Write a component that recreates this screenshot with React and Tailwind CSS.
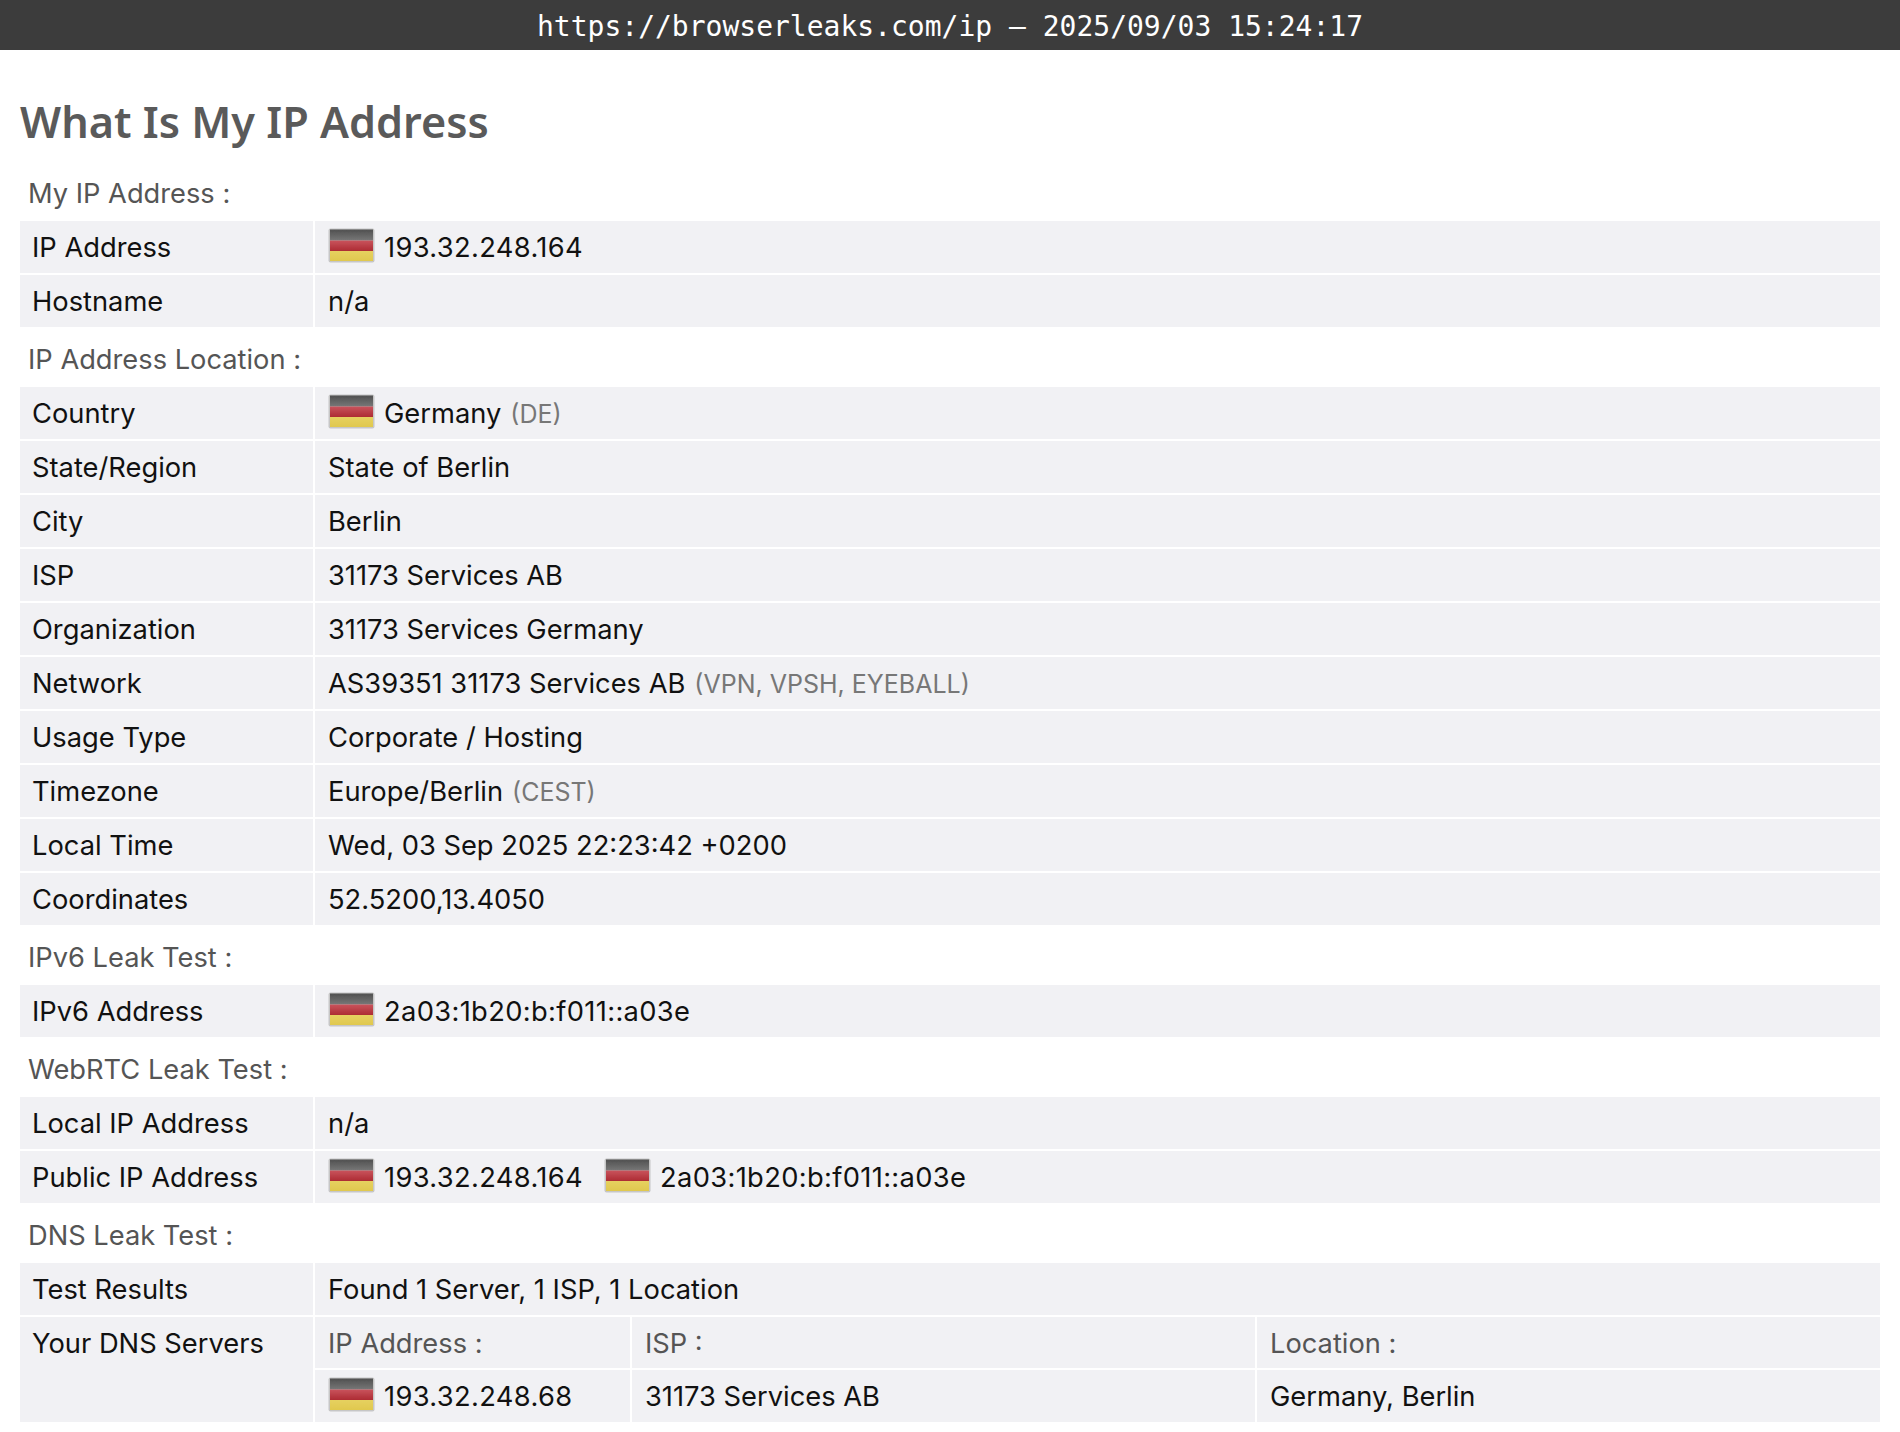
const Flag = () => (
  <svg width="47" height="35" viewBox="0 0 47 35" className="inline-block -my-[4px] align-[-1.5px] mr-[9px]">
    <defs>
      <linearGradient id="flagBlack" x1="0" y1="0" x2="0" y2="1">
        <stop offset="0" stopColor="#505050" />
        <stop offset="1" stopColor="#777777" />
      </linearGradient>
      <linearGradient id="flagRed" x1="0" y1="0" x2="0" y2="1">
        <stop offset="0" stopColor="#c9545c" />
        <stop offset="1" stopColor="#ad2b34" />
      </linearGradient>
      <linearGradient id="flagGold" x1="0" y1="0" x2="0" y2="1">
        <stop offset="0" stopColor="#e6d160" />
        <stop offset="1" stopColor="#e0c84e" />
      </linearGradient>
      <filter id="soft" x="-5%" y="-5%" width="110%" height="110%">
        <feGaussianBlur stdDeviation="0.5" />
      </filter>
    </defs>
    <g filter="url(#soft)">
      <rect x="0.5" y="0.5" width="46" height="34" rx="2" fill="#c6c6c6" />
      <rect x="2" y="1.5" width="43" height="11" fill="url(#flagBlack)" />
      <rect x="2" y="12.5" width="43" height="10.5" fill="url(#flagRed)" />
      <rect x="2" y="23" width="43" height="10" fill="url(#flagGold)" />
    </g>
  </svg>
);

const Muted = ({ children }) => <span className="ml-[9px] text-[25px] text-[#777]">{children}</span>;

const Label = ({ children }) => (
  <div className="h-[60px] pl-2 pt-[16px] text-[27.25px] leading-[34px] text-[#555]">{children}</div>
);

const Cell = ({ children, className = 'h-[52px] px-[13px]' }) => (
  <div className={`bg-[#f1f1f4] pt-[2px] flex items-center ${className}`}>
    <div>{children}</div>
  </div>
);

const Row = ({ name, children }) => (
  <div className="grid grid-cols-[293px_1fr] gap-x-[2px]">
    <Cell className="h-[52px] pl-[12px]">{name}</Cell>
    <Cell>{children}</Cell>
  </div>
);

const Ip = ({ value }) => (
  <span className="tracking-[0.35px]">
    <Flag />
    {value}
  </span>
);

export default function App() {
  return (
    <div className="min-h-screen bg-white text-[27.3px] leading-[34px] text-[#111]" style={{ fontFamily: 'Inter, sans-serif' }}>
      {/* Address bar */}
      <div className="h-[50px] pt-[3px] bg-[#3c3c3c] flex items-center justify-center text-white text-[28px]" style={{ fontFamily: '"DejaVu Sans Mono", monospace' }}>
        https://browserleaks.com/ip – 2025/09/03 15:24:17
      </div>

      <div className="px-5">
        <h1 className="pt-[42px] h-[111px] text-[43.2px] leading-[60px] font-semibold text-[#5a5a5a]" style={{ fontFamily: '"Noto Sans", sans-serif' }}>
          What Is My IP Address
        </h1>

        <Label>My IP Address :</Label>
        <div className="flex flex-col gap-[2px]">
          <Row name="IP Address"><Ip value="193.32.248.164" /></Row>
          <Row name="Hostname">n/a</Row>
        </div>

        <Label>IP Address Location :</Label>
        <div className="flex flex-col gap-[2px]">
          <Row name="Country"><Flag />Germany<Muted>(DE)</Muted></Row>
          <Row name="State/Region">State of Berlin</Row>
          <Row name="City">Berlin</Row>
          <Row name="ISP">31173 Services AB</Row>
          <Row name="Organization">31173 Services Germany</Row>
          <Row name="Network">AS39351 31173 Services AB<Muted>(VPN, VPSH, EYEBALL)</Muted></Row>
          <Row name="Usage Type">Corporate / Hosting</Row>
          <Row name="Timezone">Europe/Berlin<Muted>(CEST)</Muted></Row>
          <Row name="Local Time">Wed, 03 Sep 2025 22:23:42 +0200</Row>
          <Row name="Coordinates">52.5200,13.4050</Row>
        </div>

        <Label>IPv6 Leak Test :</Label>
        <Row name="IPv6 Address"><Ip value="2a03:1b20:b:f011::a03e" /></Row>

        <Label>WebRTC Leak Test :</Label>
        <div className="flex flex-col gap-[2px]">
          <Row name="Local IP Address">n/a</Row>
          <Row name="Public IP Address">
            <Ip value="193.32.248.164" />
            <span className="ml-[21px]"><Ip value="2a03:1b20:b:f011::a03e" /></span>
          </Row>
        </div>

        <Label>DNS Leak Test :</Label>
        <div className="flex flex-col gap-[2px]">
          <Row name="Test Results">Found 1 Server, 1 ISP, 1 Location</Row>
          <div className="grid grid-cols-[293px_1fr] gap-x-[2px]">
            <div className="bg-[#f1f1f4] pl-[12px] pr-[13px] pt-[10px]">Your DNS Servers</div>
            <div className="grid grid-cols-[315px_623px_1fr] gap-[2px]">
              <Cell className="h-[51px] px-[13px] text-[27.25px] text-[#555]">IP Address :</Cell>
              <Cell className="h-[51px] px-[13px] text-[27.25px] text-[#555]">ISP :</Cell>
              <Cell className="h-[51px] px-[13px] text-[27.25px] text-[#555]">Location :</Cell>
              <Cell><Ip value="193.32.248.68" /></Cell>
              <Cell>31173 Services AB</Cell>
              <Cell>Germany, Berlin</Cell>
            </div>
          </div>
        </div>
      </div>
    </div>
  );
}
